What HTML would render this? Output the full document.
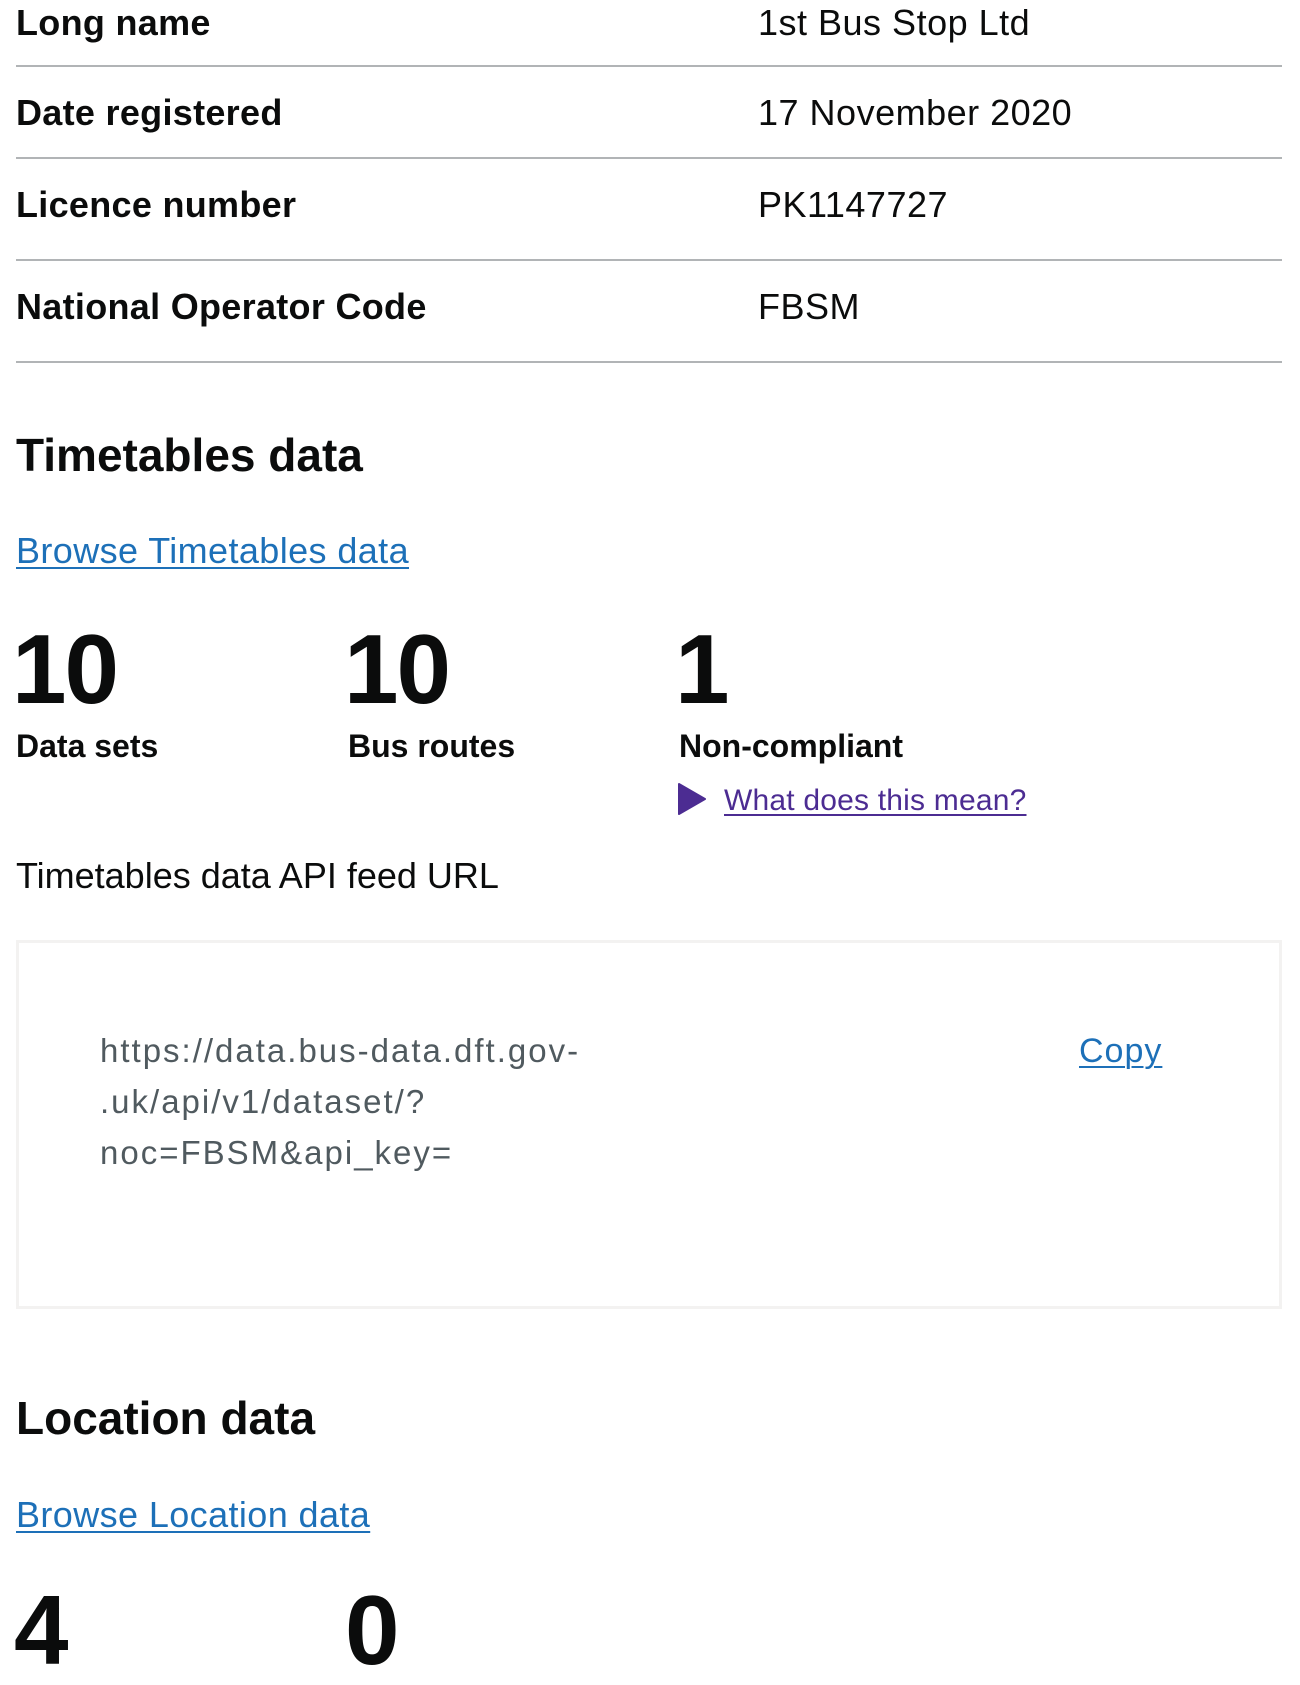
<!DOCTYPE html>
<html><head><meta charset="utf-8"><style>
html,body{margin:0;padding:0;background:#fff;}
body{width:1300px;height:1674px;position:relative;overflow:hidden;font-family:"Liberation Sans",Arial,sans-serif;color:#0b0c0c;}
.t{position:absolute;white-space:nowrap;line-height:1;}
.b{font-weight:bold;}
.lab{font-weight:bold;font-size:36px;letter-spacing:0.3px;}
.val{font-size:36px;letter-spacing:0.5px;}
.hr{position:absolute;left:16px;width:1266px;height:2px;background:#b1b4b6;}
.lk{color:#1d70b8;text-decoration:underline;text-underline-offset:4px;text-decoration-thickness:2px;}
.num{font-weight:bold;font-size:98px;letter-spacing:-2px;}
.url{font-size:33px;color:#505a5f;letter-spacing:2px;}
</style></head><body>
<div class="t lab" style="left:16px;top:5px">Long name</div>
<div class="t val" style="left:758px;top:5px">1st Bus Stop Ltd</div>
<div class="hr" style="top:65px"></div>
<div class="t lab" style="left:16px;top:95px">Date registered</div>
<div class="t val" style="left:758px;top:95px">17 November 2020</div>
<div class="hr" style="top:157px"></div>
<div class="t lab" style="left:16px;top:187px">Licence number</div>
<div class="t val" style="left:758px;top:187px">PK1147727</div>
<div class="hr" style="top:259px"></div>
<div class="t lab" style="left:16px;top:289px">National Operator Code</div>
<div class="t val" style="left:758px;top:289px">FBSM</div>
<div class="hr" style="top:361px"></div>

<div class="t b" style="left:16px;top:432px;font-size:46px">Timetables data</div>
<div class="t lk" style="left:16px;top:533px;font-size:36px;letter-spacing:0.4px">Browse Timetables data</div>

<div class="t num" style="left:12px;top:620px">10</div>
<div class="t num" style="left:344px;top:620px">10</div>
<div class="t num" style="left:675px;top:620px">1</div>
<div class="t b" style="left:16px;top:730px;font-size:32px">Data sets</div>
<div class="t b" style="left:348px;top:730px;font-size:32px">Bus routes</div>
<div class="t b" style="left:679px;top:730px;font-size:32px">Non-compliant</div>
<svg style="position:absolute;left:677px;top:783px" width="30" height="32" viewBox="0 0 30 32"><path d="M2 1 L28 16 L2 31 Z" fill="#4c2c92" stroke="#4c2c92" stroke-width="2" stroke-linejoin="round"/></svg>
<div class="t" style="left:724px;top:786px;font-size:30px;color:#4c2c92;text-decoration:underline;text-underline-offset:4px;text-decoration-thickness:2px;letter-spacing:0.2px">What does this mean?</div>

<div class="t" style="left:16px;top:858px;font-size:36px">Timetables data API feed URL</div>
<div style="position:absolute;left:16px;top:940px;width:1260px;height:363px;border:3px solid #f3f2f1;"></div>
<div class="t url" style="left:100px;top:1034px">https://data.bus-data.dft.gov-</div>
<div class="t url" style="left:100px;top:1085px">.uk/api/v1/dataset/?</div>
<div class="t url" style="left:100px;top:1136px">noc=FBSM&amp;api_key=</div>
<div class="t lk" style="left:1079px;top:1034px;font-size:34px;letter-spacing:1px">Copy</div>

<div class="t b" style="left:16px;top:1395px;font-size:46px">Location data</div>
<div class="t lk" style="left:16px;top:1497px;font-size:36px;letter-spacing:0.4px">Browse Location data</div>
<div class="t num" style="left:14px;top:1581px">4</div>
<div class="t num" style="left:345px;top:1581px">0</div>
</body></html>
